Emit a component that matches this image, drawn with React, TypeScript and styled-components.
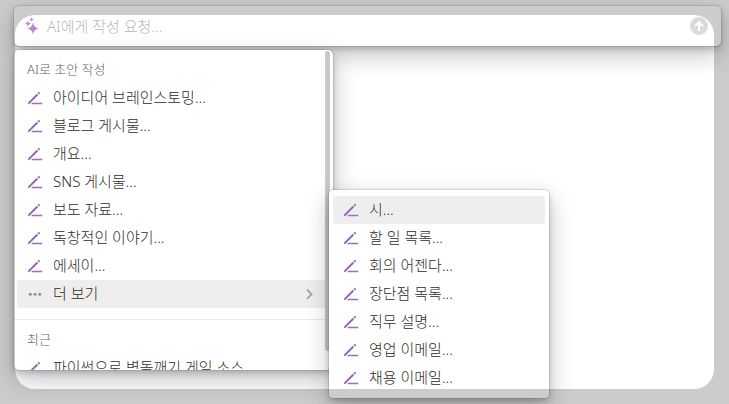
import React from "react";
import styled, { createGlobalStyle } from "styled-components";

const GlobalStyle = createGlobalStyle`
  *, *::before, *::after { box-sizing: border-box; }
  body {
    margin: 0;
    background: #ffffff;
    color: #2f2d28;
    font-family: "Noto Sans", "Noto Sans CJK KR", sans-serif;
    font-weight: 300;
  }
  button, input { font: inherit; color: inherit; }
`;

const floating = `
  background: #ffffff;
  box-shadow:
    0 0 0 1px rgba(15, 15, 15, 0.1),
    0 3px 6px rgba(15, 15, 15, 0.2),
    0 9px 24px rgba(15, 15, 15, 0.25);
`;

const Page = styled.main`
  min-height: 100vh;
  padding: 6px 8px 6px 14px;
  overflow: hidden;
`;

const PromptBar = styled.form`
  ${floating}
  display: flex;
  align-items: center;
  gap: 8px;
  height: 40px;
  padding: 0 13px 0 11px;
  border-radius: 5px;
`;

const PromptInput = styled.input`
  flex: 1;
  min-width: 0;
  height: 24px;
  padding: 0;
  border: 0;
  outline: 0;
  background: transparent;
  font-size: 15px;
  &::placeholder {
    color: #b8b7b5;
    opacity: 1;
  }
`;

const SendButton = styled.button`
  display: flex;
  padding: 0;
  border: 0;
  background: transparent;
`;

const MenuArea = styled.div`
  position: relative;
  width: 319px;
  margin-top: 4px;
`;

const Menu = styled.nav`
  ${floating}
  height: 320px;
  padding: 6px 3px 0;
  border-radius: 5px;
  overflow: hidden;
`;

const Scrollbar = styled.div`
  position: absolute;
  top: 1px;
  right: 3px;
  width: 5px;
  height: 300px;
  border-radius: 3px;
  background: #c9c9c9;
`;

const SectionTitle = styled.h2`
  height: 28px;
  margin: 0;
  padding: 0 10px;
  font-size: 13px;
  font-weight: 300;
  line-height: 26px;
  color: #65645f;
`;

const ItemList = styled.ul`
  margin: 0;
  padding: 0;
  list-style: none;
`;

const Item = styled.button<{ $active?: boolean }>`
  display: flex;
  align-items: center;
  gap: 10px;
  width: 100%;
  height: 28px;
  padding: 0 10px;
  border: 0;
  border-radius: 3px;
  background: ${(p) => (p.$active ? "#eeeeee" : "transparent")};
  font-size: 15px;
  text-align: left;
  white-space: nowrap;
`;

const ItemText = styled.span`
  flex: 1;
  height: 28px;
  line-height: 26px;
`;

const SubmenuArrow = styled.span`
  display: flex;
  padding-right: 5px;
`;

const Divider = styled.hr`
  height: 1px;
  margin: 11px -3px 6px;
  border: 0;
  background: #e9e9e8;
`;

const SubMenu = styled.nav`
  ${floating}
  position: absolute;
  top: 140px;
  left: 315px;
  width: 220px;
  padding: 6px 4px;
  border-radius: 4px;
`;

const Spotlight = styled.div`
  position: fixed;
  inset: 15px;
  border-radius: 20px;
  box-shadow: 0 0 0 100px rgba(0, 0, 0, 0.2);
  pointer-events: none;
`;

const PenIcon = () => (
  <svg width="16" height="16" viewBox="0 0 16 16" aria-hidden="true">
    <path d="M2 12.900 10.400 4.500" stroke="#9065b0" strokeWidth="1.900" fill="none" />
    <path d="M.8 14 1.500 11.800l1.700 1.700Z" fill="#9065b0" />
    <path d="m11.200 3.800 1.300-1.300" stroke="#9065b0" strokeWidth="2" fill="none" />
    <path d="M4.600 13.500h10.600" stroke="#9a70bb" strokeWidth="1.500" fill="none" />
  </svg>
);

const DotsIcon = () => (
  <svg width="16" height="16" viewBox="0 0 16 16" fill="#8f8e8b" aria-hidden="true">
    <circle cx="3.3" cy="8.3" r="1.5" />
    <circle cx="8" cy="8.3" r="1.5" />
    <circle cx="12.7" cy="8.3" r="1.5" />
  </svg>
);

const ChevronIcon = () => (
  <svg width="12" height="12" viewBox="0 0 12 12" aria-hidden="true">
    <path d="m4 1.500 4.600 4.700L4 10.900" stroke="#a9a8a6" strokeWidth="2" fill="none" />
  </svg>
);

const SparkleIcon = () => (
  <svg width="14" height="18" viewBox="0 0 14 18" fill="#b58bd0" aria-hidden="true">
    <path d="M8 5.200Q8.900 10.600 13.600 11.500 8.900 12.400 8 17.600 7.100 12.400 2.400 11.500 7.100 10.600 8 5.200Z" />
    <path d="M2.900 3.700Q3.400 6.100 5.800 6.600 3.400 7.100 2.900 9.500 2.400 7.100 0 6.600 2.400 6.100 2.900 3.700Z" />
    <path d="M6.600.5Q6.900 2.200 8.600 2.500 6.900 2.800 6.600 4.500 6.300 2.800 4.600 2.500 6.300 2.200 6.600.5Z" />
  </svg>
);

const SendIcon = () => (
  <svg width="18" height="18" viewBox="0 0 18 18" aria-hidden="true">
    <circle cx="9" cy="9" r="9" fill="#dadada" />
    <path
      d="M9 13.200V5.200M5.500 8.600 9 5.100l3.500 3.500"
      stroke="#ffffff"
      strokeWidth="2"
      strokeLinecap="round"
      strokeLinejoin="round"
      fill="none"
    />
  </svg>
);

const drafts = [
  "아이디어 브레인스토밍...",
  "블로그 게시물...",
  "개요...",
  "SNS 게시물...",
  "보도 자료...",
  "독창적인 이야기...",
  "에세이...",
];

const moreDrafts = [
  "시...",
  "할 일 목록...",
  "회의 어젠다...",
  "장단점 목록...",
  "직무 설명...",
  "영업 이메일...",
  "채용 이메일...",
];

const DraftItem = ({ text, active }: { text: string; active?: boolean }) => (
  <li>
    <Item type="button" $active={active}>
      <PenIcon />
      <ItemText>{text}</ItemText>
    </Item>
  </li>
);

export default function App() {
  return (
    <>
      <GlobalStyle />
      <Page>
        <PromptBar onSubmit={(e) => e.preventDefault()}>
          <SparkleIcon />
          <PromptInput aria-label="AI에게 작성 요청" placeholder="AI에게 작성 요청..." />
          <SendButton type="submit" aria-label="보내기">
            <SendIcon />
          </SendButton>
        </PromptBar>
        <MenuArea>
          <Menu aria-label="AI로 초안 작성">
            <SectionTitle>AI로 초안 작성</SectionTitle>
            <ItemList>
              {drafts.map((text) => (
                <DraftItem key={text} text={text} />
              ))}
              <li>
                <Item type="button" $active aria-haspopup="menu" aria-expanded="true">
                  <DotsIcon />
                  <ItemText>더 보기</ItemText>
                  <SubmenuArrow>
                    <ChevronIcon />
                  </SubmenuArrow>
                </Item>
              </li>
            </ItemList>
            <Divider />
            <SectionTitle>최근</SectionTitle>
            <ItemList>
              <DraftItem text="파이썬으로 벽돌깨기 게임 소스" />
            </ItemList>
          </Menu>
          <Scrollbar />
          <SubMenu aria-label="더 보기">
            <ItemList>
              {moreDrafts.map((text, i) => (
                <DraftItem key={text} text={text} active={i === 0} />
              ))}
            </ItemList>
          </SubMenu>
        </MenuArea>
      </Page>
      <Spotlight />
    </>
  );
}
